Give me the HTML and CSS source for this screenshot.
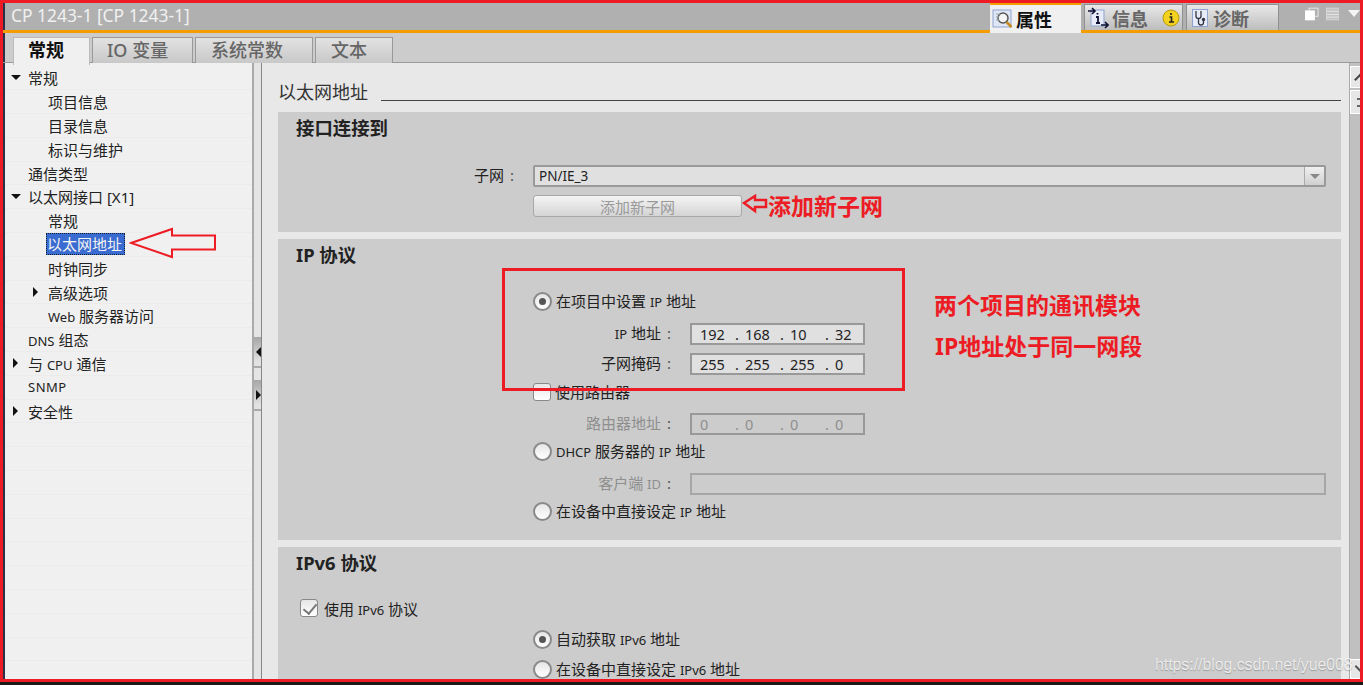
FILE: index.html
```html
<!DOCTYPE html>
<html lang="zh-CN">
<head>
  <meta charset="UTF-8" />
  <title>CP 1243-1</title>
  <link rel="stylesheet" href="styles.css">
</head>
<body>
  <div class="window">
    <!-- Title bar -->
    <header class="titlebar">
      <div class="title">CP 1243-1 [CP 1243-1]</div>
      <div class="insp-tabs">
        <div class="insp-tab active">
          <svg width="22" height="22" viewBox="0 0 22 22"><rect x="1" y="2" width="18" height="17" fill="#dfe6f5" stroke="#8fa3d0"/><circle cx="11" cy="10" r="5" fill="#f4f4f4" stroke="#555" stroke-width="1.5"/><path d="M14.5 14l5 5" stroke="#c58a1d" stroke-width="2.5"/><path d="M4 6h4M4 9h3M4 12h3" stroke="#9aa" /></svg>
          <span>属性</span>
        </div>
        <div class="insp-tab info">
          <svg width="22" height="22" viewBox="0 0 22 22"><rect x="4" y="3" width="13" height="16" fill="#e6ebf7" stroke="#8fa3d0"/><path d="M1 4h6M5 1l3 3-3 3" fill="none" stroke="#113" stroke-width="1.6"/><path d="M14 18h6M18 15l3 3-3 3" fill="none" stroke="#113" stroke-width="1.6"/><path d="M10.5 6v1.5M9 10h2v6M9 16h4" fill="none" stroke="#113" stroke-width="1.8"/></svg>
          <span>信息</span>
          <svg class="info-badge" width="18" height="18" viewBox="0 0 18 18"><circle cx="9" cy="9" r="8" fill="#f2d21f" stroke="#b99a10"/><path d="M9 4v2M7.5 8H9.5v5M7 13h5" fill="none" stroke="#222" stroke-width="1.6"/></svg>
        </div>
        <div class="insp-tab diag">
          <svg width="22" height="22" viewBox="0 0 22 22"><rect x="2.5" y="2.5" width="15" height="17" fill="#e6ebf7" stroke="#8fa3d0"/><path d="M6 4v5a2.5 2.5 0 0 0 5 0V4M8.5 12v3.5a2.5 2.5 0 0 0 5 0V14" fill="none" stroke="#334" stroke-width="1.3"/><circle cx="13.5" cy="12.5" r="1.7" fill="#334"/></svg>
          <span>诊断</span>
        </div>
      </div>
      <div class="win-icons">
        <svg width="15" height="14" viewBox="0 0 15 14"><rect x="4.5" y="0.5" width="10" height="9" fill="none" stroke="#eee"/><rect x="0" y="3" width="11" height="11" fill="#fff"/></svg>
        <svg width="15" height="14" viewBox="0 0 15 14"><rect x="0.5" y="0.5" width="14" height="13" fill="#c4c4c4" stroke="#d8d8d8"/><path d="M1 4h13M1 7.5h13M1 10.5h13" stroke="#e8e8e8"/></svg>
        <span class="win-down"></span>
      </div>
    </header>

    <!-- Property tabs -->
    <nav class="tabs">
      <div class="tab active">常规</div>
      <div class="tab tab-io">IO 变量</div>
      <div class="tab tab-const">系统常数</div>
      <div class="tab tab-text">文本</div>
    </nav>

    <div class="main">
      <!-- Left tree -->
      <ul class="tree">
        <li class="lvl1"><i class="arrow down"></i>常规</li>
        <li class="lvl2"><i class="arrow"></i>项目信息</li>
        <li class="lvl2"><i class="arrow"></i>目录信息</li>
        <li class="lvl2"><i class="arrow"></i>标识与维护</li>
        <li class="lvl1"><i class="arrow"></i>通信类型</li>
        <li class="lvl1"><i class="arrow down"></i>以太网接口 [X1]</li>
        <li class="lvl2"><i class="arrow"></i>常规</li>
        <li class="lvl2"><i class="arrow"></i><span class="selected">以太网地址</span></li>
        <li class="lvl2"><i class="arrow"></i>时钟同步</li>
        <li class="lvl2"><i class="arrow right"></i>高级选项</li>
        <li class="lvl2"><i class="arrow"></i><span><span class="en">Web</span> 服务器访问</span></li>
        <li class="lvl1"><i class="arrow"></i><span><span class="en">DNS</span> 组态</span></li>
        <li class="lvl1"><i class="arrow right"></i><span>与 <span class="en">CPU</span> 通信</span></li>
        <li class="lvl1"><i class="arrow"></i><span class="en snmp">SNMP</span></li>
        <li class="lvl1"><i class="arrow right"></i>安全性</li>
        <li></li><li></li><li></li><li></li><li></li><li></li><li></li><li></li><li></li><li></li><li></li>
      </ul>

      <!-- Splitter between tree and page -->
      <div class="splitter">
        <div class="split-btn"><i class="tri-left"></i></div>
        <div class="split-btn"><i class="tri-right"></i></div>
      </div>

      <!-- Page content -->
      <div class="content">
        <div class="page-head">
          <h1>以太网地址</h1>
          <div class="rule"></div>
        </div>

        <section class="group group-net">
          <h2>接口连接到</h2>
          <div class="form">
            <div class="field short">
              <label>子网<em>:</em></label>
              <div class="combo">PN/IE_3<span class="combo-btn"><i></i></span></div>
            </div>
            <div class="add-row"><button class="btn">添加新子网</button></div>
          </div>
        </section>

        <section class="group group-ip">
          <h2>IP 协议</h2>
          <div class="form">
            <div class="opt"><i class="radio on"></i><span>在项目中设置 <span class="en">IP</span> 地址</span></div>
            <div class="field">
              <label><span class="en">IP</span> 地址<em>:</em></label>
              <div class="ip-box"><span><b>192</b>.</span><span><b>168</b>.</span><span><b>10</b>.</span><span><b>32</b></span></div>
            </div>
            <div class="field next">
              <label>子网掩码<em>:</em></label>
              <div class="ip-box"><span><b>255</b>.</span><span><b>255</b>.</span><span><b>255</b>.</span><span><b>0</b></span></div>
            </div>
            <div class="opt check-row"><i class="check"></i>使用路由器</div>
            <div class="field off">
              <label>路由器地址<em>:</em></label>
              <div class="ip-box"><span><b>0</b>.</span><span><b>0</b>.</span><span><b>0</b>.</span><span><b>0</b></span></div>
            </div>
            <div class="opt"><i class="radio"></i><span><span class="en">DHCP</span> 服务器的 <span class="en">IP</span> 地址</span></div>
            <div class="field off">
              <label>客户端 <span class="en">ID</span><em>:</em></label>
              <div class="text-box"></div>
            </div>
            <div class="opt"><i class="radio"></i><span>在设备中直接设定 <span class="en">IP</span> 地址</span></div>
          </div>
        </section>

        <section class="group group-v6">
          <h2>IPv6 协议</h2>
          <div class="v6-check"><i class="check on"></i><span>使用 <span class="en">IPv6</span> 协议</span></div>
          <div class="form">
            <div class="opt first"><i class="radio on"></i><span>自动获取 <span class="en">IPv6</span> 地址</span></div>
            <div class="opt next"><i class="radio"></i><span>在设备中直接设定 <span class="en">IPv6</span> 地址</span></div>
          </div>
        </section>
      </div>

      <!-- Right scroll bar -->
      <div class="scroll">
        <div class="scroll-btn"><i class="mark-up"></i></div>
        <div class="scroll-btn tall"><i class="mark-lines"></i></div>
        <div class="scroll-btn corner"><i class="mark-corner"></i></div>
      </div>
    </div>

    <!-- Red notes drawn on top of the screenshot -->
    <svg class="note-arrow big" width="90" height="32" viewBox="0 0 90 32"><path d="M2 16L43 2V8.5H86V22.5H43V30Z" fill="none" stroke="#ed1c24" stroke-width="2"/></svg>
    <svg class="note-arrow small" width="26" height="20" viewBox="0 0 26 20"><path d="M2 9L13 2V6H24V13H13V17Z" fill="none" stroke="#ed1c24" stroke-width="2.5"/></svg>
    <div class="note add-note">添加新子网</div>
    <div class="note-box"></div>
    <div class="note line1">两个项目的通讯模块</div>
    <div class="note line2">IP地址处于同一网段</div>
  </div>
  <div class="watermark">https://blog.csdn.net/yue008</div>
</body>
</html>
```

FILE: styles.css
```css
/* Reset and Base Styles */
* {
  box-sizing: border-box;
  margin: 0;
  padding: 0;
}
body {
  position: relative;
  height: 685px;
  overflow: hidden;
  background: #1a1a1a;
  color: #222;
  font-family: "Noto Sans", "Noto Sans CJK SC", sans-serif;
  font-size: 15px;
}
i {
  display: block;
  flex: none;
}
/* Latin runs sit smaller next to the Chinese text */
.en {
  font-size: 13px;
}
.snmp {
  letter-spacing: 0.5px;
}

/* Outer frame */
.window {
  height: 682px;
  border: 3px solid #ed1c24;
  display: flex;
  flex-direction: column;
  overflow: hidden;
  background: #ccc;
}

/* Title bar */
.titlebar {
  flex: none;
  height: 30px;
  display: flex;
  padding-left: 8px;
  background: #b0b0b0;
  border-bottom: 3px solid #f59c00;
  box-shadow: inset 2px 0 #2c3048;
}
.title {
  color: #f0f0f0;
  font-size: 17.4px;
  line-height: 24px;
  flex: 1;
}
.insp-tabs {
  display: flex;
  gap: 3px;
}
.insp-tab {
  flex: none;
  height: 26px;
  margin-top: 1px;
  padding-left: 2px;
  display: flex;
  align-items: center;
  gap: 3px;
  background: linear-gradient(#e8e8e8, #bdbdbd);
  border: 1px solid #8f8f8f;
  border-bottom: 0;
  color: #666;
  font-size: 18px;
  font-weight: 700;
  white-space: nowrap;
}
.insp-tab svg {
  flex: none;
}
.insp-tab.active {
  width: 91px;
  height: 30px;
  margin-top: 0;
  gap: 2px;
  background: #f0f0f0;
  border: 0;
  border-top: 2px solid #f59c00;
  color: #111;
  position: relative;
}
.insp-tab.info {
  width: 99px;
}
.insp-tab.diag {
  width: 93px;
  padding-left: 3px;
  gap: 1px;
}
.info-badge {
  margin-left: 11px;
}
.win-icons {
  width: 81px;
  display: flex;
  align-items: center;
  padding: 0 0 6px 26px;
  gap: 7px;
}
.win-down {
  width: 0;
  height: 0;
  margin-left: 2px;
  border-left: 6px solid transparent;
  border-right: 6px solid transparent;
  border-top: 7px solid #f4f4f4;
}

/* Property tabs */
.tabs {
  flex: none;
  height: 30px;
  display: flex;
  gap: 2px;
  padding: 4px 0 0 10px;
  background: #ccc;
  border-bottom: 1px solid #999;
  box-shadow: inset 2px 0 #2c3048;
}
.tab {
  height: 26px;
  padding-left: 15px;
  background: linear-gradient(#e2e2e2, #c8c8c8);
  border: 1px solid #999;
  border-bottom: 0;
  color: #666;
  font-size: 18px;
  line-height: 24px;
  font-weight: 500;
  white-space: nowrap;
}
.tab-io {
  width: 101px;
  padding-left: 14px;
}
.tab-const {
  width: 118px;
}
.tab-text {
  width: 78px;
}
.tab.active {
  width: 77px;
  height: 28px;
  padding-left: 14px;
  background: #f0f0f0;
  border-color: #bbb;
  color: #111;
  font-weight: 700;
  position: relative;
  z-index: 1;
}

.main {
  flex: 1;
  min-height: 0;
  display: flex;
  background: #e8e8e8;
}

/* Left tree */
.tree {
  flex: none;
  width: 249px;
  height: 100%;
  overflow: hidden;
  padding-top: 3.5px;
  list-style: none;
  background: #f0f0f0;
  border-left: 2px solid #2c3048;
}
.tree li {
  height: 23.8px;
  display: flex;
  align-items: center;
  border-bottom: 1px solid #ebebeb;
  white-space: nowrap;
}
.tree .lvl1 {
  padding-left: 3px;
}
.tree .lvl2 {
  padding-left: 23px;
}
.arrow {
  width: 20px;
}
.arrow.down::before {
  content: "";
  display: block;
  margin-left: 3px;
  width: 0;
  height: 0;
  border-left: 5px solid transparent;
  border-right: 5px solid transparent;
  border-top: 5px solid #111;
}
.arrow.right::before {
  content: "";
  display: block;
  margin-left: 5px;
  width: 0;
  height: 0;
  border-top: 5px solid transparent;
  border-bottom: 5px solid transparent;
  border-left: 5px solid #111;
}
.selected {
  margin-left: -2px;
  width: 79px;
  height: 22px;
  line-height: 20px;
  background: #3a6bd0;
  color: #f4f4f4;
  border: 1px dotted #123;
}

/* Splitter */
.splitter {
  flex: none;
  width: 10px;
  padding-top: 274px;
  background: #e4e4e4;
  border-left: 2px solid #aaa;
  border-right: 1px solid #888;
}
.split-btn {
  height: 31px;
  margin-bottom: 12px;
  display: flex;
  align-items: center;
  justify-content: flex-end;
  background: linear-gradient(#a6a6a6, #e2e2e2 85%);
  border-bottom: 2px solid #aaa;
}
.tri-left {
  border-top: 5px solid transparent;
  border-bottom: 5px solid transparent;
  border-right: 5px solid #111;
}
.tri-right {
  border-top: 5px solid transparent;
  border-bottom: 5px solid transparent;
  border-left: 5px solid #111;
}

/* Page content */
.content {
  flex: 1;
  min-width: 0;
  padding-left: 16px;
  overflow: hidden;
}
.page-head {
  height: 49px;
  display: flex;
  align-items: flex-end;
  gap: 13px;
  padding-bottom: 7px;
}
.page-head h1 {
  font-size: 18px;
  font-weight: 400;
  color: #333;
  line-height: 26px;
}
.rule {
  flex: 1;
  height: 1px;
  margin-bottom: 4px;
  background: #444;
}
.group {
  background: #ccc;
  margin-bottom: 7px;
  padding-right: 15px;
}
.group h2 {
  height: 34px;
  padding-left: 18px;
  font-size: 18.4px;
  line-height: 32px;
  font-weight: 700;
  color: #222;
}
.group-net {
  height: 120px;
}
.group-ip {
  height: 301px;
}
.group-v6 {
  height: 140px;
}

/* Form rows */
.form {
  padding-left: 255px;
  display: flex;
  flex-direction: column;
}
.group-net .form {
  padding-top: 19px;
}
.group-ip .form {
  padding-top: 17px;
}
.opt {
  height: 22px;
  margin-top: 5px;
  padding-bottom: 2px;
  display: flex;
  align-items: center;
  gap: 4px;
  white-space: nowrap;
}
.opt i {
  margin-top: 2px;
}
.group-ip .opt:first-child {
  margin-top: 0;
}
.opt.first {
  margin-top: 8px;
}
.opt.next {
  margin-top: 8px;
}
.opt.check-row {
  height: 20px;
  margin-top: 7px;
}
.field {
  height: 22px;
  margin-top: 11px;
  margin-left: -255px;
  display: flex;
  align-items: center;
}
.field.next {
  margin-top: 8px;
}
.field.short {
  margin-top: 0;
}
.field label {
  flex: none;
  width: 412px;
  padding: 0 19px 3px 0;
  text-align: right;
}
.field.short label {
  width: 255px;
}
.field em {
  font-style: normal;
  margin-left: 6px;
  color: #555;
}
.field.off {
  color: #8f8f8f;
}
.ip-box {
  width: 175px;
  height: 22px;
  padding-left: 8px;
  display: flex;
  font-size: 14.5px;
  line-height: 19px;
  background: #e0e0e0;
  border: 2px solid #999;
}
.ip-box span {
  flex: none;
  display: flex;
  width: 45px;
}
.ip-box b {
  width: 35px;
  font-weight: 400;
}
.field.off .ip-box {
  background: #ccc;
}
.text-box {
  flex: 1;
  height: 22px;
  background: #ccc;
  border: 2px solid #a6a6a6;
}
.combo {
  flex: 1;
  height: 22px;
  padding-left: 4px;
  display: flex;
  justify-content: space-between;
  line-height: 18px;
  font-size: 13.5px;
  background: #e0e0e0;
  border: 2px solid #999;
  border-radius: 2px;
}
.combo-btn {
  width: 20px;
  display: flex;
  align-items: center;
  justify-content: center;
  background: linear-gradient(#f0f0f0, #cfcfcf);
  border-left: 1px solid #aaa;
}
.combo-btn i {
  border-left: 5px solid transparent;
  border-right: 5px solid transparent;
  border-top: 5px solid #888;
}
.add-row {
  margin-top: 8px;
}
.btn {
  display: block;
  width: 209px;
  height: 22px;
  padding-bottom: 5px;
  font: inherit;
  color: #9a9a9a;
  background: linear-gradient(#f4f4f4, #d4d4d4);
  border: 1px solid #a8a8a8;
  border-radius: 3px;
}

/* Radios and checkboxes */
.radio {
  width: 19px;
  height: 19px;
  border-radius: 50%;
  border: 2px solid #8a8a8a;
  background: linear-gradient(#e6e6e6, #fff);
  position: relative;
}
.radio.on::after {
  content: "";
  position: absolute;
  left: 4px;
  top: 4px;
  width: 7px;
  height: 7px;
  border-radius: 50%;
  background: #555;
}
.check {
  width: 18px;
  height: 18px;
  border-radius: 3px;
  border: 1px solid #888;
  background: linear-gradient(#e6e6e6, #fff);
  position: relative;
}
.check.on::after {
  content: "";
  position: absolute;
  left: 5px;
  top: 1px;
  width: 6px;
  height: 11px;
  border: solid #777;
  border-width: 0 2.5px 2.5px 0;
  transform: rotate(40deg);
}
.v6-check {
  height: 22px;
  margin: 17px 0 0 22px;
  padding-bottom: 2px;
  display: flex;
  align-items: center;
  gap: 6px;
}

/* Right scroll bar */
.scroll {
  flex: none;
  width: 11px;
  margin-left: 8px;
  position: relative;
  padding-top: 3px;
  background: #c0c0c0;
  border-left: 1px solid #aaa;
}
.scroll-btn {
  height: 22px;
  margin-bottom: 2px;
  overflow: hidden;
  background: #e6e6e6;
  border: 1px solid #fff;
  border-right: 0;
  position: relative;
}
.scroll-btn.tall {
  height: 24px;
}
.scroll-btn.corner {
  position: absolute;
  right: 0;
  bottom: 0;
  width: 10px;
  height: 20px;
  margin: 0;
}
.mark-up {
  position: absolute;
  left: 5px;
  top: 8px;
  width: 9px;
  height: 9px;
  border: solid #444;
  border-width: 2px 0 0 2px;
  transform: rotate(45deg);
}
.mark-lines {
  position: absolute;
  left: 6px;
  top: 7px;
  width: 8px;
  height: 9px;
  border-top: 2px solid #666;
  border-bottom: 2px solid #666;
}
.mark-corner {
  position: absolute;
  left: 3px;
  top: 8px;
  width: 9px;
  height: 2px;
  background: #555;
  transform: rotate(45deg);
}

/* Red notes over the screenshot */
.note-arrow {
  position: absolute;
}
.note-arrow.big {
  left: 129px;
  top: 227px;
}
.note-arrow.small {
  left: 742px;
  top: 194px;
}
.note {
  position: absolute;
  color: #ed1c24;
  font-size: 23px;
  line-height: 30px;
  font-weight: 700;
  white-space: nowrap;
}
.add-note {
  left: 768px;
  top: 191px;
}
.line1 {
  left: 934px;
  top: 290px;
}
.line2 {
  left: 935px;
  top: 331px;
}
.note-box {
  position: absolute;
  left: 502px;
  top: 268px;
  width: 403px;
  height: 123px;
  border: 3px solid #ed1c24;
}
.watermark {
  position: absolute;
  left: 1155px;
  top: 656px;
  color: rgba(255, 255, 255, 0.75);
  text-shadow: 0 1px 1px rgba(0, 0, 0, 0.25);
  font-family: "Liberation Sans", sans-serif;
  font-size: 15.8px;
  white-space: nowrap;
}
```
